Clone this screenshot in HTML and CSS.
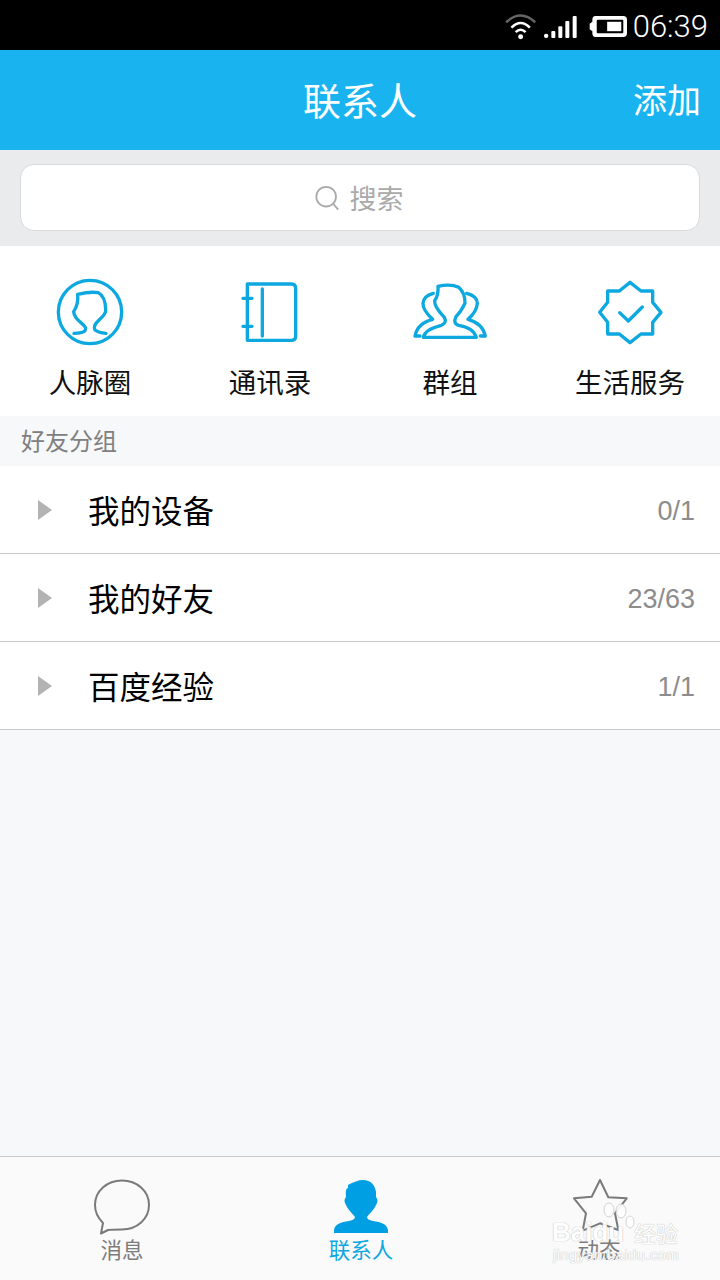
FILE: index.html
```html
<!DOCTYPE html>
<html lang="zh">
<head>
<meta charset="utf-8">
<title>联系人</title>
<link rel="stylesheet" href="styles.css">
</head>
<body>
<div class="app">
  <div class="status">
    <svg class="st-wifi" viewBox="78 40 96 76">
      <path d="M84 66 Q125 28 166 66" class="arc-dim"/>
      <path d="M99 81 Q125 55 151 81" class="arc"/>
      <path d="M111 94 Q125 80 139 94" class="arc"/>
      <circle cx="125" cy="107" r="7" fill="#fff"/>
    </svg>
    <svg class="st-signal" viewBox="190 42 105 72">
      <rect x="193" y="98" width="13" height="13" rx="6" fill="#fff"/>
      <rect x="215" y="90" width="12" height="21" rx="3" fill="#fff"/>
      <rect x="236" y="76" width="12" height="35" rx="3" fill="#fff"/>
      <rect x="257" y="60" width="12" height="51" rx="3" fill="#fff"/>
      <rect x="279" y="45" width="12" height="66" rx="3" fill="#fff"/>
    </svg>
    <svg class="st-battery" viewBox="326 46 116 68">
      <path d="M328 72 L336 66 V60 Q336 49 345 49 H428 Q439 49 439 60 V100 Q439 111 428 111 H345 Q336 111 336 100 V94 L328 88 Z" fill="#fff"/>
      <rect x="349" y="60" width="79" height="40" rx="3" fill="#000"/>
      <rect x="380" y="66" width="42" height="28" fill="#fff"/>
    </svg>
    <span class="st-time">06:39</span>
  </div>

  <header class="header">
    <h1 class="title">联系人</h1>
    <span class="add">添加</span>
  </header>

  <div class="search-wrap">
    <div class="search">
      <svg class="search-icon" viewBox="0 0 28 28">
        <circle cx="12.5" cy="12.5" r="11"/>
        <path d="M20 20 L26 27"/>
      </svg>
      <span>搜索</span>
    </div>
  </div>

  <nav class="shortcuts">
    <div class="shortcut">
      <svg class="sc-icon" viewBox="150 36 240 240">
        <circle cx="270" cy="156" r="95"/>
        <path d="M222 220 Q250 219 255 212 Q262 203 245 190 Q222 172 221 155 Q236 132 233 103 Q270 94 295 98 Q316 110 317 148 Q320 160 295 182 Q278 198 285 210 Q295 218 318 220"/>
      </svg>
      <span class="sc-label">人脉圈</span>
    </div>
    <div class="shortcut">
      <svg class="sc-icon" viewBox="690 36 240 240">
        <path d="M742 72 H874 Q887 72 887 85 V228 Q887 241 874 241 H742 Z"/>
        <path d="M787 87 V228 M729 115 H756 M729 199 H756"/>
      </svg>
      <span class="sc-label">通讯录</span>
    </div>
    <div class="shortcut">
      <svg class="sc-icon" viewBox="150 36 240 240">
        <path d="M234 79 Q272 70 296 82 Q316 100 315 130 Q303 155 288 170 Q278 190 296 196 Q340 203 349 232 H190 Q195 208 244 196 Q262 188 253 172 Q222 140 224 122 Q236 105 234 79 Z"/>
        <path d="M220 100 Q190 108 189 130 Q188 150 218 178 Q172 190 165 228 H180"/>
        <path d="M320 100 Q352 108 352 130 Q350 155 324 178 Q368 190 376 228 H361"/>
      </svg>
      <span class="sc-label">群组</span>
    </div>
    <div class="shortcut">
      <svg class="sc-icon" viewBox="690 36 240 240">
        <path d="M810 67 L843 93 H878 V127 L903 157 L878 187 V222 H843 L810 248 L778 222 H743 V187 L719 157 L743 127 V93 H778 Z"/>
        <path d="M779 158 L805 183 L847 141"/>
      </svg>
      <span class="sc-label">生活服务</span>
    </div>
  </nav>

  <div class="section-label">好友分组</div>

  <ul class="groups">
    <li class="group"><i class="arrow"></i><span class="g-name">我的设备</span><span class="g-count">0/1</span></li>
    <li class="group"><i class="arrow"></i><span class="g-name">我的好友</span><span class="g-count">23/63</span></li>
    <li class="group"><i class="arrow"></i><span class="g-name">百度经验</span><span class="g-count">1/1</span></li>
  </ul>

  <div class="spacer"></div>

  <footer class="tabbar">
    <div class="tab">
      <svg class="tab-icon" viewBox="0 0 60 56">
        <path class="tab-line" d="M11 44 C6 39 3 33 3 26 C3 12 15 1.5 30 1.5 C45 1.5 57 12 57 26 C57 40 45 50.5 30 50.5 C25 50.5 20 50.5 16 51 L9 54.5 Z"/>
      </svg>
      <span class="tab-label">消息</span>
    </div>
    <div class="tab tab-active">
      <svg class="tab-icon" viewBox="0 0 60 56">
        <path fill="#009fe3" d="M17 6 C22 3 28 1 32 1 C40 1 44 6 45 13 C45 15 45 17 45 18 C47 20 47 23 45 26 C43 31 38 35 36 38 C36 40 38 41 42 42 C50 43 56 45 57 51 L57 54 H3 L3 51 C4 45 10 43 18 42 C22 41 24 40 24 38 C22 35 17 31 15 26 C13 23 13 20 15 18 C15 14 14 10 17 9 Z"/>
      </svg>
      <span class="tab-label">联系人</span>
    </div>
    <div class="tab">
      <svg class="tab-icon" viewBox="0 0 60 56">
        <path class="tab-line" d="M31 1 L39.3 18.3 L57.7 19.3 L46 34.3 L49.3 51 L31 44.3 L13.7 51.7 L17 34.3 L5 19.3 L22.7 17.7 Z"/>
      </svg>
      <span class="tab-label">动态</span>
    </div>
  </footer>

  <div class="watermark">
    <svg class="wm-paw" viewBox="0 0 34 40">
      <ellipse cx="7" cy="8" rx="5" ry="7"/>
      <ellipse cx="19" cy="9" rx="5" ry="7"/>
      <ellipse cx="28" cy="20" rx="4" ry="6"/>
    </svg>
    <div class="wm-top"><span class="wm-brand">Baidu</span><span class="wm-cn">经验</span></div>
    <div class="wm-url">jingyan.baidu.com</div>
  </div>
</div>
</body>
</html>
```

FILE: styles.css
```css
* { box-sizing: border-box; }
html, body { margin: 0; padding: 0; }
body {
  width: 720px;
  height: 1280px;
  overflow: hidden;
  font-family: "Noto Sans CJK SC", "Noto Sans", sans-serif;
}
.app {
  position: relative;
  width: 720px;
  height: 1280px;
  display: flex;
  flex-direction: column;
  background: #f7f8fa;
}

/* status bar */
.status {
  height: 50px;
  background: #000;
  display: flex;
  align-items: center;
  justify-content: flex-end;
  padding-right: 12px;
  color: #fff;
}
.st-wifi { width: 34px; height: 27px; margin-right: 5px; margin-top: 2px; }
.arc, .arc-dim { fill: none; stroke-width: 7; }
.arc { stroke: #fff; }
.arc-dim { stroke: #666; }
.st-signal { width: 35px; height: 24px; margin-right: 11px; margin-top: 3px; }
.st-battery { width: 39px; height: 23px; margin-right: 5px; margin-top: 3px; }
.st-time {
  font-family: Roboto, sans-serif;
  font-weight: 300;
  font-size: 31px;
  line-height: 36px;
  margin-top: 3px;
}

/* header */
.header {
  position: relative;
  height: 100px;
  background: #19b4ef;
  display: flex;
  align-items: center;
  justify-content: center;
  color: #fff;
}
.title {
  margin: -3px 0 0;
  font-size: 38px;
  font-weight: 400;
  line-height: 50px;
}
.add {
  position: absolute;
  right: 19px;
  top: 24px;
  font-size: 34px;
  line-height: 50px;
}

/* search */
.search-wrap {
  height: 96px;
  background: #e9ebed;
  padding: 14px 20px 15px;
}
.search {
  height: 67px;
  background: #fff;
  border: 1px solid #d8dadc;
  border-radius: 14px;
  display: flex;
  align-items: center;
  justify-content: center;
  gap: 10px;
  color: #aaa;
  font-size: 27px;
}
.search-icon { width: 25px; height: 26px; margin-left: -2px; fill: none; stroke: #aaa; stroke-width: 2; }

/* shortcuts */
.shortcuts {
  height: 170px;
  background: #fff;
  display: grid;
  grid-template-columns: repeat(4, 180px);
  padding-top: 26px;
}
.shortcut {
  display: flex;
  flex-direction: column;
  align-items: center;
}
.sc-icon {
  width: 80px;
  height: 80px;
  fill: none;
  stroke: #0ea8e0;
  stroke-width: 10;
  stroke-linejoin: round;
  stroke-linecap: round;
}
.sc-label {
  margin-top: 10px;
  font-size: 27.5px;
  line-height: 38px;
  color: #111;
}

/* section label */
.section-label {
  height: 50px;
  padding-left: 21px;
  font-size: 24px;
  line-height: 47px;
  color: #808080;
  background: #f7f8fa;
}

/* groups */
.groups { margin: 0; padding: 0; list-style: none; background: #fff; }
.group {
  height: 88px;
  border-bottom: 1px solid #c8c8c8;
  display: flex;
  align-items: center;
  padding: 0 25px 2px 38px;
}
.arrow {
  width: 0;
  height: 0;
  border-left: 14px solid #b3b3b3;
  border-top: 10.5px solid transparent;
  border-bottom: 10.5px solid transparent;
  margin: 2px 36px 0 0;
}
.g-name { font-size: 31.5px; line-height: 44px; color: #000; flex: 1; }
.g-count {
  font-family: "Liberation Sans", sans-serif;
  font-size: 27px;
  line-height: 44px;
  margin-top: 4px;
  color: #8c8c8c;
}

.spacer { flex: 1; background: #f7f8fa; }

/* tab bar */
.tabbar {
  height: 124px;
  background: #fafafa;
  border-top: 1px solid #c8c8c8;
  display: grid;
  grid-template-columns: 244px 234px 242px;
  padding-top: 22px;
}
.tab {
  display: flex;
  flex-direction: column;
  align-items: center;
  color: #7c7c7c;
}
.tab-icon { width: 60px; height: 56px; }
.tab-line { fill: none; stroke: #7a7a7a; stroke-width: 2; stroke-linejoin: round; }
.tab-label { font-size: 21.5px; line-height: 30px; margin-top: -1px; }
.tab-active { color: #0ea8e0; }

/* watermark laid over the tab bar */
.watermark {
  position: absolute;
  left: 552px;
  top: 1196px;
  width: 132px;
  height: 70px;
  color: #fff;
  opacity: 0.9;
  text-shadow: 0 0 1px #bdbdbd, 0 0 1px #bdbdbd;
}
.wm-paw { position: absolute; left: 50px; top: 6px; width: 34px; height: 40px; fill: #fff; stroke: #cfcfcf; }
.wm-top {
  position: absolute;
  left: 0;
  top: 19px;
  display: flex;
  align-items: center;
  white-space: nowrap;
}
.wm-brand {
  font-family: "Liberation Sans", sans-serif;
  font-weight: 700;
  font-size: 26px;
  line-height: 34px;
  width: 82px;
}
.wm-cn { font-size: 22px; line-height: 34px; }
.wm-url {
  position: absolute;
  left: 1px;
  top: 50px;
  font-family: "Liberation Sans", sans-serif;
  font-size: 15px;
  line-height: 18px;
  letter-spacing: 0.3px;
  white-space: nowrap;
}
```
